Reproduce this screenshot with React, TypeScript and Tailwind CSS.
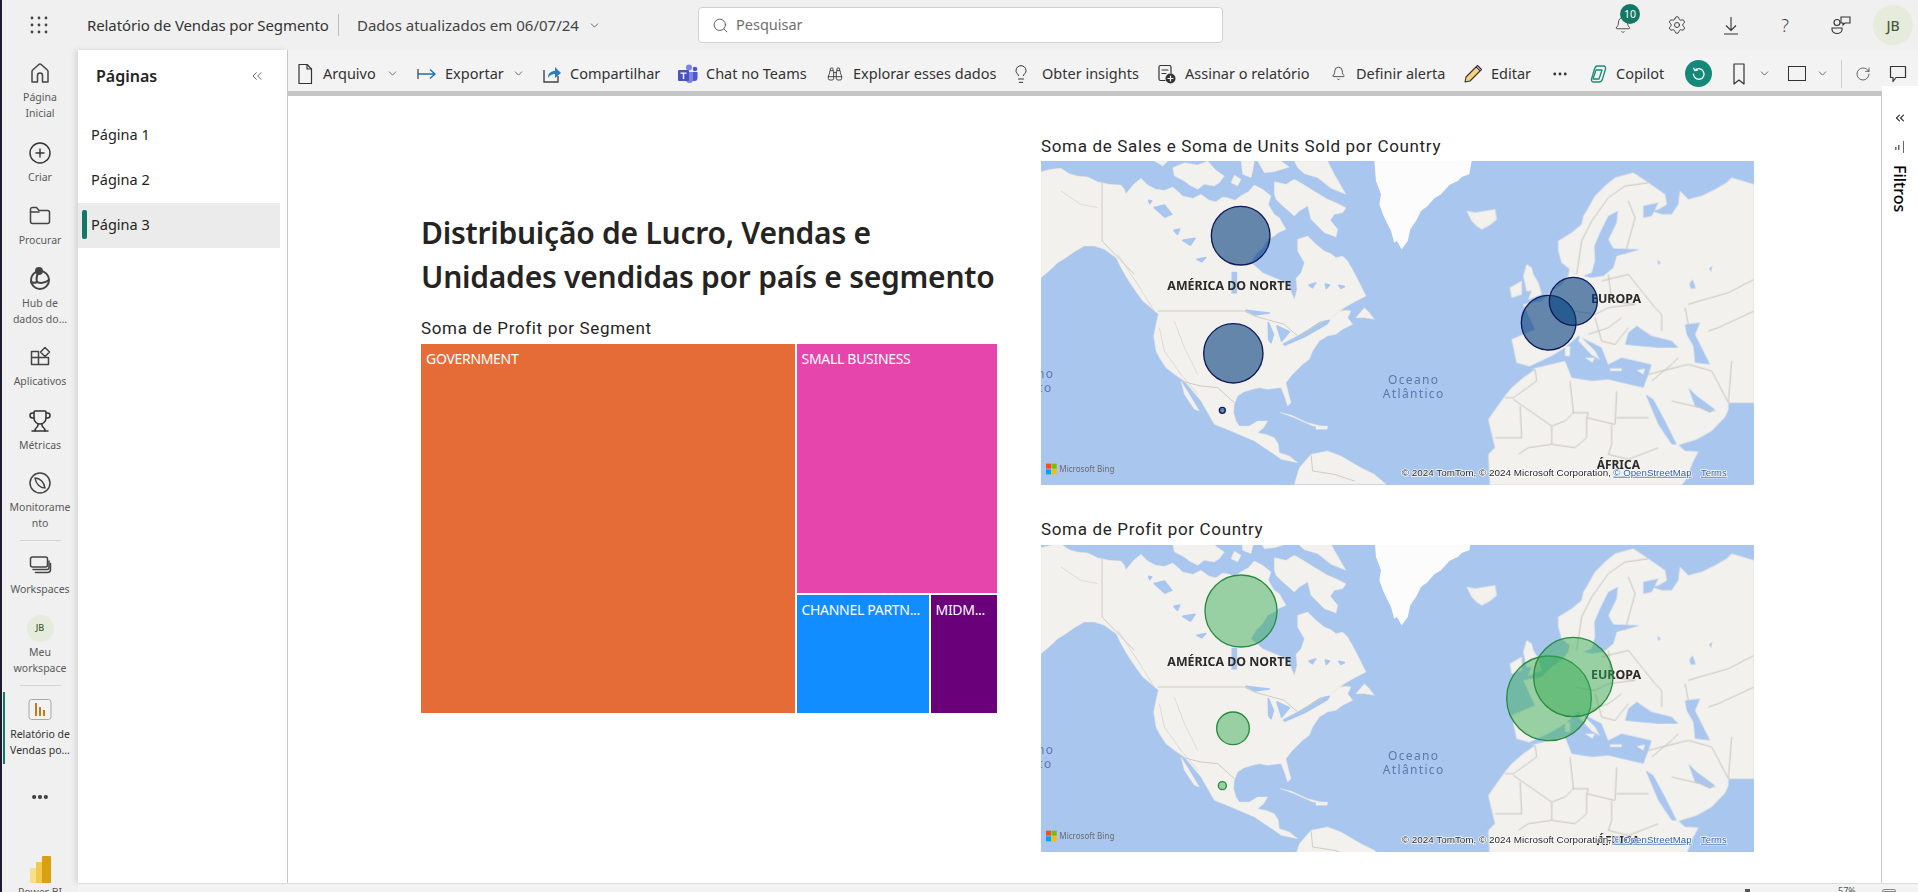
import React from "react";
import { ChevronDown, ChevronsLeft, Search, Settings, Bell, Binoculars, Lightbulb, RotateCw, Ellipsis, CirclePlus, Trophy } from "lucide-react";

const LAND_LEFT = [
  "M0,32 L30,25 L60,22 L85,38 L110,45 L140,48 L170,62 L205,70 L240,72 L250,85 L255,98 L278,70 L300,52 L320,72 L345,85 L370,88 L395,78 L412,92 L425,105 L455,112 L480,100 L505,118 L525,122 L545,108 L560,110 L582,118 L600,104 L622,92 L640,72 L665,85 L690,105 L682,130 L700,160 L715,170 L735,205 L712,215 L700,225 L680,235 L665,260 L645,280 L630,305 L650,322 L665,335 L695,348 L725,360 L745,380 L760,415 L768,385 L765,352 L780,335 L790,305 L770,270 L770,235 L800,225 L825,250 L850,270 L870,278 L885,290 L905,285 L920,300 L945,345 L975,405 L945,420 L910,440 L885,458 L870,470 L895,450 L915,448 L930,450 L920,470 L935,490 L905,505 L885,520 L860,525 L835,540 L815,570 L805,595 L785,610 L770,625 L750,645 L735,665 L742,695 L750,725 L740,735 L730,705 L720,680 L700,682 L680,685 L655,680 L635,685 L610,692 L590,705 L580,730 L578,755 L585,780 L595,795 L625,795 L650,780 L680,780 L668,800 L650,815 L680,822 L700,830 L712,850 L715,875 L745,885 L770,905 L745,900 L720,895 L700,880 L670,860 L640,840 L605,825 L570,810 L520,790 L500,755 L480,720 L455,690 L430,660 L400,640 L375,620 L358,595 L345,570 L338,525 L345,490 L352,460 L330,440 L305,420 L280,385 L260,355 L240,320 L225,290 L190,265 L160,255 L130,255 L100,272 L75,290 L50,305 L30,325 L0,350 Z",
  "M700,62 L735,70 L760,55 L790,72 L810,85 L860,115 L885,125 L915,140 L905,155 L880,160 L868,178 L890,205 L885,228 L850,215 L830,195 L810,175 L800,135 L775,150 L760,165 L740,148 L720,130 L705,115 L700,100 Z",
  "M395,20 L430,5 L470,12 L500,0 L525,28 L550,45 L535,65 L520,75 L490,70 L470,85 L445,72 L430,60 L400,45 Z",
  "M340,0 L380,0 L365,15 Z",
  "M600,0 L640,0 L635,30 L630,50 L605,40 Z",
  "M650,0 L720,0 L745,18 L700,32 L670,35 Z",
  "M760,0 L860,0 L880,40 L915,100 L870,82 L830,50 L790,38 L770,20 Z",
  "M580,42 L600,55 L590,75 L570,65 Z",
  "M945,470 L970,440 L985,455 L1000,475 L970,470 Z",
  "M718,755 L760,770 L815,795 L860,800 L800,785 L750,762 Z",
  "M825,795 L860,795 L858,805 L825,805 Z",
  "M420,660 L445,700 L475,750 L460,745 L430,700 Z",
  "M760,970 L775,920 L810,880 L860,870 L900,885 L960,920 L1000,940 L1035,970 Z",
];
const LAKES = [
  "M340,140 L370,132 L392,160 L372,168 Z",
  "M425,238 L462,232 L448,252 Z",
  "M468,295 L494,290 L482,302 Z",
  "M574,335 L586,335 L586,395 L574,395 Z",
  "M615,448 L685,456 L642,462 Z",
  "M682,485 L697,520 L690,545 L683,535 Z",
  "M708,495 L745,512 L722,540 Z",
  "M728,549 L780,522 L838,484 L865,478 L858,488 L790,527 L732,552 Z",
  "M804,372 L824,366 L814,380 Z",
  "M853,369 L866,372 L856,382 Z",
  "M893,373 L910,377 L900,382 Z",
  "M399,208 L416,204 L409,220 Z",
  "M323,118 L332,120 L326,127 Z",
];
const LAND_RIGHT = [
  "M215,150 L240,155 L270,150 L300,145 L305,175 L285,192 L260,205 L245,195 L230,180 Z",
  "M395,310 L410,320 L415,340 L430,365 L440,400 L400,415 L410,390 L395,390 L385,345 Z",
  "M345,380 L380,360 L380,400 L350,410 Z",
  "M545,345 L525,325 L500,305 L490,270 L490,240 L530,215 L560,190 L565,165 L575,150 L600,105 L630,75 L660,50 L715,35 L760,65 L810,100 L815,130 L790,145 L770,150 L800,160 L830,160 L850,130 L855,90 L880,115 L920,105 L960,85 L995,65 L1010,50 L1077,70 L1077,725 L1000,725 L1000,745 L990,768 L950,810 L905,835 L850,852 L870,870 L910,872 L895,900 L870,960 L860,972 L285,972 L280,880 L300,860 L280,775 L330,705 L350,680 L385,650 L420,625 L400,615 L365,605 L350,535 L420,505 L385,430 L440,420 L470,390 L500,370 L520,345 L525,315 Z",
];
const WATER_RIGHT = [
  "M565,345 L590,335 L600,300 L598,255 L615,215 L640,165 L668,150 L665,185 L640,235 L655,262 L735,265 L690,278 L665,285 L655,320 L625,345 L590,350 Z",
  "M745,135 L790,125 L770,165 L745,170 Z",
  "M400,618 L470,585 L510,560 L550,525 L620,560 L640,610 L680,590 L770,610 L760,640 L745,680 L640,655 L590,660 L530,650 L510,600 L415,622 Z",
  "M690,550 L700,515 L725,495 L770,525 L830,540 L850,560 L790,560 L730,555 Z",
  "M870,490 L915,485 L900,520 L945,610 L900,605 L895,555 L875,520 Z",
  "M880,680 L905,705 L960,745 L945,755 L900,735 Z",
  "M752,700 L775,715 L810,780 L845,850 L830,850 L790,790 Z",
  "M883,368 L893,355 L902,382 L887,382 Z",
  "M942,322 L952,314 L948,332 Z",
  "M787,297 L797,305 L790,312 Z",
];
const ISLANDS_RIGHT = [
  "M555,525 L600,570 L615,597 L590,582 L550,540 Z",
  "M570,590 L600,590 L592,605 Z",
  "M510,555 L525,555 L525,585 L510,585 Z",
  "M515,525 L528,525 L525,548 Z",
  "M645,622 L680,622 L680,630 L645,630 Z",
  "M725,628 L750,622 L745,640 Z",
  "M690,565 L770,560 L855,590 L770,610 L690,590 Z",
  "M620,560 L650,540 L680,555 L660,590 L640,610 Z",
];
const BORDERS_RIGHT = [
  "M420,625 L425,660 L355,710 L330,710",
  "M355,715 L470,795 L510,780 L535,755 L525,660",
  "M535,755 L580,755 L575,770 L660,790 L665,690",
  "M665,770 L760,770",
  "M375,735 L380,830 L300,830",
  "M470,795 L470,850 L400,860 L370,880",
  "M470,850 L540,860 L575,830 L575,770",
  "M650,790 L650,850 L640,880 L700,895 L790,860",
  "M540,450 L600,460 L640,440 L720,430",
  "M620,360 L700,340 L780,440 L800,460 L800,510",
  "M700,120 L720,170 L690,280",
  "M545,340 L560,240 L590,180 L640,110 L690,75 L760,65",
  "M760,640 L880,610 L950,630 L1000,725",
  "M770,660 L830,610 L850,590",
  "M1010,600 L1000,725",
  "M940,510 L970,500 L1077,450",
  "M880,430 L930,415 L1000,395 L1077,355",
  "M870,440 L880,490",
  "M600,470 L620,540 L660,550 L700,500",
  "M640,340 L650,420 L720,430",
  "M830,720 L960,750",
  "M580,520 L640,500 L680,470",
];
const BORDERS_LEFT = [
  "M183,65 L183,240 L280,340",
  "M350,450 L610,450 L640,465 L730,490 L770,525 L850,480",
  "M420,660 L480,675 L530,680 L580,725",
  "M810,880 L815,930 L880,940 L940,960",
];
const WATER_C = "#a9c6ee";
const LAND_C = "#f3f1ed";

type C = { x: number; y: number; r: number };

function MapVisual({ vb, bottom, circles, fill, stroke }: { vb: string; bottom: number; circles: C[]; fill: string; stroke: string }) {
  return (
    <svg viewBox={vb} preserveAspectRatio="none" className="block w-full h-full">
      <rect x="0" y="0" width="2139" height="972" fill={WATER_C} />
      <g className="blur-[0.6px]">
        <g fill={LAND_C} stroke="#e6e4df" strokeWidth="1.500">
          {LAND_LEFT.map((d) => <path key={d} d={d} />)}
        </g>
        <g fill={WATER_C} stroke={WATER_C} strokeWidth="5" strokeLinejoin="round">{LAKES.map((d) => <path key={d} d={d} />)}</g>
        <g fill="none" stroke="#dfdcd6" strokeWidth="3">
          <path d="M355,500 L370,570 L420,640 L470,700" />
          <path d="M400,480 L430,560 L470,640" />
          <path d="M230,280 L290,370 L340,450" />
          <path d="M60,90 L120,130 L170,140" />
        </g>
        <g fill="none" stroke="#cfccc5" strokeWidth="3">{BORDERS_LEFT.map((d) => <path key={d} d={d} />)}</g>
        <path d="M1000,0 L1292,0 L1285,40 L1262,48 L1250,60 L1225,72 L1200,100 L1180,112 L1160,135 L1140,150 L1125,180 L1108,205 L1100,240 L1082,265 L1068,240 L1060,245 L1050,210 L1040,190 L1028,165 L1015,130 L1020,100 L1005,60 Z" fill="#fcfcfc" />
        <g transform="translate(1062 0)">
          <g fill={LAND_C} stroke="#e6e4df" strokeWidth="1.500">{LAND_RIGHT.map((d) => <path key={d} d={d} />)}</g>
          <g fill={WATER_C}>{WATER_RIGHT.map((d) => <path key={d} d={d} />)}</g>
          <g fill={LAND_C}>{ISLANDS_RIGHT.map((d) => <path key={d} d={d} />)}</g>
          <g fill="none" stroke="#c8c5be" strokeWidth="3">{BORDERS_RIGHT.map((d) => <path key={d} d={d} />)}</g>
        </g>
      </g>
      <g className="font-['Noto_Sans',sans-serif]">
        <text x="565" y="388" textAnchor="middle" fontSize="36" fontWeight="700" fill="#2b2b2b" textLength="372" lengthAdjust="spacingAndGlyphs">AMÉRICA DO NORTE</text>
        <text x="1725" y="427" textAnchor="middle" fontSize="36" fontWeight="700" fill="#2b2b2b" textLength="150" lengthAdjust="spacingAndGlyphs">EUROPA</text>
        <text x="1732" y="925" textAnchor="middle" fontSize="36" fontWeight="700" fill="#2b2b2b" textLength="130" lengthAdjust="spacingAndGlyphs">ÁFRICA</text>
        <text x="1118" y="670" textAnchor="middle" fontSize="36" fill="#5b78ad" letterSpacing="4">Oceano</text>
        <text x="1118" y="712" textAnchor="middle" fontSize="36" fill="#5b78ad" letterSpacing="4">Atlântico</text>
        <text x="-12" y="650" fontSize="36" fill="#5b78ad" letterSpacing="4">no</text>
        <text x="-12" y="692" fontSize="36" fill="#5b78ad" letterSpacing="4">co</text>
      </g>
      {circles.map((c) => (
        <circle key={c.x} cx={c.x} cy={c.y} r={c.r} fill={fill} stroke={stroke} strokeWidth="4" />
      ))}
      <g>
        <rect x="15" y={bottom - 64} width="15" height="15" fill="#f25022" />
        <rect x="32" y={bottom - 64} width="15" height="15" fill="#7fba00" />
        <rect x="15" y={bottom - 47} width="15" height="15" fill="#00a4ef" />
        <rect x="32" y={bottom - 47} width="15" height="15" fill="#ffb900" />
        <text x="55" y={bottom - 38} fontSize="27" fill="#6b6b6b" textLength="165" lengthAdjust="spacingAndGlyphs" className="font-['Noto_Sans',sans-serif]">Microsoft Bing</text>
      </g>
      <g fontSize="28" className="font-['Liberation_Sans',sans-serif]" style={{ paintOrder: "stroke" }} stroke="#ffffff" strokeWidth="4">
        <text x="1082" y={bottom - 28} fill="#1f1f1f" textLength="628" lengthAdjust="spacingAndGlyphs">© 2024 TomTom, © 2024 Microsoft Corporation,</text>
        <text x="1717" y={bottom - 28} fill="#2a5db0" textDecoration="underline" textLength="235" lengthAdjust="spacingAndGlyphs">© OpenStreetMap</text>
        <text x="1980" y={bottom - 28} fill="#2a5db0" textDecoration="underline" textLength="77" lengthAdjust="spacingAndGlyphs">Terms</text>
      </g>
    </svg>
  );
}

const I = "text-[#333333]";

function GridDots() {
  return (
    <svg width="18" height="18" viewBox="0 0 18 18" fill="#444444">
      {[2, 9, 16].flatMap((y) => [2, 9, 16].map((x) => <circle key={`${x}-${y}`} cx={x} cy={y} r="1.4" />))}
    </svg>
  );
}

function RailIcon({ kind }: { kind: string }) {
  const p = { width: 24, height: 24, viewBox: "0 0 24 24", fill: "none", stroke: "#444444", strokeWidth: 1.5, strokeLinejoin: "round" as const, strokeLinecap: "round" as const };
  if (kind === "home") return <svg {...p}><path d="M4 21V10.500c0-.6.3-1.100.7-1.500L10.500 3.700a2.200 2.200 0 0 1 3 0L19.300 9c.4.400.7.900.7 1.500V21h-5.500v-6.500a2.500 2.500 0 0 0-5 0V21z" /></svg>;
  if (kind === "plus") return <CirclePlus size={24} strokeWidth={1.4} className={I} />;
  if (kind === "folder") return <svg {...p}><path d="M2.500 5.500a2 2 0 0 1 2-2h4l2.500 3h8.500a2 2 0 0 1 2 2v9a2 2 0 0 1-2 2h-15a2 2 0 0 1-2-2z" /><path d="M2.500 8h8.500" /></svg>;
  if (kind === "hub") return <svg {...p} strokeWidth={2}><circle cx="12" cy="13" r="9" /><path d="M12 4c-3 3-4 7-3 11 4 2 8 1 12-2" /><path d="M9 15c-2 1-4 1-6 0" /><circle cx="11" cy="4" r="3" fill="#444444" /></svg>;
  if (kind === "apps") return <svg {...p}><path d="M3.500 6.500h7v6h-7zM3.500 12.500h7v7h-7zM10.500 12.500h10v7h-10zM10.500 6.500v6" /><path d="M17 2.500l4.500 4.500-4.500 4.500-4.500-4.500z" fill="#f0f0f0" /></svg>;
  if (kind === "trophy") return <Trophy size={24} strokeWidth={1.5} className={I} />;
  if (kind === "compass") return <svg {...p}><circle cx="12" cy="12" r="10" /><path d="M7 7c5 0 9 4 10 10-5 0-9-4-10-10z" /></svg>;
  if (kind === "stack") return <svg {...p}><rect x="2.500" y="4" width="17" height="10" rx="2" /><path d="M5 16.500h14a2 2 0 0 0 2-2V8" /><path d="M7.500 19.500h12a3 3 0 0 0 3-3v-6" /></svg>;
  if (kind === "jb") return <div className="w-[27px] h-[27px] -my-[2px] rounded-full bg-[#e6ecdc] flex items-center justify-center text-[9px] font-medium text-[#4a5a3a]">JB</div>;
  if (kind === "report") return (
    <svg width="24" height="24" viewBox="0 0 24 24">
      <rect x="1" y="1.500" width="22" height="20" rx="2.500" fill="#f2f2f2" stroke="#a8a8a8" />
      <rect x="7" y="5" width="2" height="13" fill="#c27a1c" /><rect x="11" y="9" width="2" height="9" fill="#c27a1c" /><rect x="15" y="12" width="2" height="6" fill="#c27a1c" />
    </svg>
  );
  return <Ellipsis size={20} strokeWidth={3} className={I} />;
}

const railItems = [
  { k: "home", l: ["Página", "Inicial"], c: "mt-0" },
  { k: "plus", l: ["Criar"], c: "mt-[20px]" },
  { k: "folder", l: ["Procurar"], c: "mt-[19px]" },
  { k: "hub", l: ["Hub de", "dados do..."], c: "mt-[19px]" },
  { k: "apps", l: ["Aplicativos"], c: "mt-[18px]" },
  { k: "trophy", l: ["Métricas"], c: "mt-[20px]" },
  { k: "compass", l: ["Monitorame", "nto"], c: "mt-[18px]" },
  { k: "div", l: [], c: "mt-[9px]" },
  { k: "stack", l: ["Workspaces"], c: "mt-[12px]" },
  { k: "jb", l: ["Meu", "workspace"], c: "mt-[19px]" },
  { k: "div", l: [], c: "mt-[9px]" },
  { k: "report", l: ["Relatório de", "Vendas po..."], c: "mt-[12px]" },
  { k: "dots", l: [], c: "mt-[27px]" },
];

function Rail() {
  return (
    <div className="w-[76px] shrink-0 bg-[#f0f0f0] pt-[11px] flex flex-col items-center overflow-hidden">
      {railItems.map((it, i) =>
        it.k === "div" ? (
          <div key={i} className={`${it.c} h-px w-[41px] shrink-0 bg-[#d4d4d4]`} />
        ) : (
          <div key={i} className={`${it.c} relative w-full shrink-0 flex flex-col items-center`}>
            {it.k === "report" && <div className="absolute left-[1px] -top-[6px] w-[2px] h-[72px] bg-[#117865]" />}
            <div className="h-[24px] flex items-center justify-center"><RailIcon kind={it.k} /></div>
            {it.l.length > 0 && (
              <div className={`mt-[4px] text-center text-[10.5px] leading-[16px] whitespace-nowrap ${it.k === "report" ? "text-[#333333]" : "text-[#5a5a5a]"}`}>
                {it.l.map((t) => <div key={t}>{t}</div>)}
              </div>
            )}
          </div>
        )
      )}
      <svg className="mt-[47px] shrink-0" width="21" height="27" viewBox="0 0 21 27">
        <rect x="0" y="12" width="9" height="15" rx="1" fill="#f6e08a" />
        <rect x="6" y="6" width="9" height="21" rx="1" fill="#f2c94c" />
        <rect x="12" y="0" width="9" height="27" rx="1" fill="#d9a012" />
      </svg>
      <div className="text-[10.5px] leading-[16px] mt-[1px] text-[#5a5a5a] whitespace-nowrap">Power BI</div>
    </div>
  );
}

function Pages() {
  const rows = ["Página 1", "Página 2", "Página 3"];
  return (
    <div className="w-[209px] shrink-0 bg-white shadow-[-3px_0_5px_rgba(0,0,0,0.1)] border-r border-[#c8c8c8] box-content">
      <div className="flex items-center justify-between pl-[18px] pr-[22px] h-[51px]">
        <span className="text-[16px] font-semibold text-[#252423]">Páginas</span>
        <ChevronsLeft size={16} strokeWidth={1.1} className="text-[#333333]" />
      </div>
      <div className="mt-[12px] mr-[7px]">
        {rows.map((r, i) => (
          <div key={r} className={`relative h-[45px] flex items-center pl-[13px] pb-[1px] text-[14.5px] text-[#252423] ${i === 2 ? "bg-[#ebebeb]" : ""}`}>
            {i === 2 && <div className="absolute left-[4px] top-[7px] w-[5px] h-[29px] rounded-[2px] bg-[#117865]" />}
            {r}
          </div>
        ))}
      </div>
    </div>
  );
}

const Chev = ({ c = "" }: { c?: string }) => <ChevronDown size={13} strokeWidth={1.4} className={`text-[#444444] shrink-0 ${c}`} />;

function TbItem({ icon, label, w, chev, chevMr }: { icon: React.ReactNode; label: string; w: string; chev?: boolean; chevMr?: string }) {
  return (
    <div className={`${w} shrink-0 flex items-center`}>
      <div className="w-[20px] h-[24px] flex items-center justify-center shrink-0">{icon}</div>
      <span className="ml-[8px] text-[14.5px] text-[#333333] whitespace-nowrap">{label}</span>
      {chev && <Chev c={`ml-auto ${chevMr}`} />}
    </div>
  );
}

function Toolbar() {
  const s = { fill: "none", stroke: "#333333", strokeWidth: 1.2, strokeLinejoin: "round" as const, strokeLinecap: "round" as const };
  return (
    <div className="h-[41px] shrink-0 bg-[#f3f3f3] flex items-center pl-[7px] pt-[6px]">
      <TbItem w="w-[122px]" label="Arquivo" chev chevMr="mr-[18px]" icon={<svg width="16" height="22" viewBox="0 0 16 22" {...s}><path d="M2 1.500h8l4.500 4.500v14.500H2z" /><path d="M10 1.500V6h4.500" /></svg>} />
      <TbItem w="w-[125px]" label="Exportar" chev chevMr="mr-[17px]" icon={<svg width="20" height="14" viewBox="0 0 20 14" fill="none" stroke="#1c6fb8" strokeWidth="1.3"><path d="M1 2v10" stroke="#444444" /><path d="M1 7h17M13 2.500 18 7l-5 4.500" /></svg>} />
      <TbItem w="w-[136px]" label="Compartilhar" icon={<svg width="20" height="20" viewBox="0 0 20 20"><path d="M2 6v12h14v-6" fill="none" stroke="#444444" strokeWidth="1.4" /><path d="M6 14c0-5 3-7 7-7V3l6 6-6 5v-4c-3 0-5 1-7 4z" fill="#2c7cc4" /></svg>} />
      <TbItem w="w-[147px]" label="Chat no Teams" icon={<svg width="20" height="20" viewBox="0 0 20 20"><circle cx="11" cy="3.500" r="3" fill="#7b83eb" /><circle cx="17" cy="5" r="2.300" fill="#5059c9" /><path d="M13 8h6.500v6a3 3 0 0 1-3 3H13z" fill="#5059c9" /><path d="M6 8h9v7.500a3.500 3.500 0 0 1-7 0z" fill="#7b83eb" /><rect x="0" y="6" width="11" height="11" rx="1" fill="#4b53bc" /><path d="M2.500 8.500h6v1.300H6.200V15H4.800V9.800H2.500z" fill="#ffffff" /></svg>} />
      <TbItem w="w-[189px]" label="Explorar esses dados" icon={<Binoculars size={16} strokeWidth={1.3} className={I} />} />
      <TbItem w="w-[143px]" label="Obter insights" icon={<Lightbulb size={20} strokeWidth={1.2} className={`${I} -translate-x-[3px]`} />} />
      <TbItem w="w-[171px]" label="Assinar o relatório" icon={<svg width="18" height="20" viewBox="0 0 18 20" {...s}><path d="M13 9V3a1.500 1.500 0 0 0-1.500-1.500h-9A1.500 1.500 0 0 0 1 3v12a1.500 1.500 0 0 0 1.500 1.500H7" /><path d="M4 6h6M4 9.500h4" /><circle cx="12.500" cy="14.500" r="5" fill="#333333" stroke="none" /><path d="M12.500 12v5M10 14.500h5" stroke="#ffffff" /></svg>} />
      <TbItem w="w-[135px]" label="Definir alerta" icon={<Bell size={15} strokeWidth={1.3} className={I} />} />
      <TbItem w="w-[87px]" label="Editar" icon={<svg width="20" height="20" viewBox="0 0 20 20"><path d="M2 18l1-5L14.500 1.500l4 4L7 17z" fill="#f6d27a" stroke="#333333" strokeWidth="1.100" strokeLinejoin="round" /><path d="M14.500 1.500l4 4-1.500 1.500-4-4z" fill="#b57bc4" stroke="#333333" strokeWidth="1" /></svg>} />
      <div className="w-[38px] shrink-0 flex"><div className="w-[20px] flex justify-center"><Ellipsis size={18} strokeWidth={1.8} className={I} /></div></div>
      <TbItem w="w-[97px]" label="Copilot" icon={<svg width="19" height="18" viewBox="0 0 19 18" fill="none" stroke="#1c8a78" strokeWidth="1.300" strokeLinejoin="round"><path d="M8 1h6.500c1.500 0 2.500 1.500 2 3l-3 10c-.4 1.500-1.800 3-3.500 3H4.500c-1.500 0-2.500-1.500-2-3l3-10C6 2.500 6.500 1 8 1z" /><path d="M7 5h6l-3 9H4z" /></svg>} />
      <div className="w-[44px] shrink-0">
        <div className="w-[27px] h-[27px] rounded-full bg-[#14897a] flex items-center justify-center">
          <svg width="15" height="15" viewBox="0 0 15 15" fill="none" stroke="#ffffff" strokeWidth="1.300"><path d="M4 4.200a5.300 5.300 0 1 1-1.600 3.600" /><path d="M2.500 1.800 3.800 4.500 6.800 4" /></svg>
        </div>
      </div>
      <div className="w-[20px] flex justify-center shrink-0"><svg width="14" height="24" viewBox="0 0 14 24" {...s}><path d="M2 2h10v20l-5-4-5 4z" /></svg></div>
      <div className="w-[38px] shrink-0 flex"><Chev c="ml-[9px]" /></div>
      <div className="w-[20px] flex justify-center shrink-0"><div className="w-[18px] h-[15px] border-[1.500px] border-[#333333]" /></div>
      <Chev c="ml-[9px]" />
      <div className="ml-[12px] w-px h-[28px] bg-[#cfcfcf] shrink-0" />
      <div className="ml-[11px] w-[20px] flex justify-center shrink-0"><RotateCw size={16} strokeWidth={1.1} className={I} /></div>
      <div className="ml-[15px] w-[20px] flex justify-center shrink-0">
        <svg width="18" height="18" viewBox="0 0 18 18" {...s}><path d="M1.500 1.500h15v11H7L4 16.500v-4H1.500z" /></svg>
      </div>
    </div>
  );
}

const din = "font-['Roboto',sans-serif] text-[17px] leading-[20px] text-[#252423] tracking-[0.66px] whitespace-nowrap";

function Treemap() {
  const lab = "px-[5px] pt-[5px] text-[14px] leading-[20px] text-white whitespace-nowrap overflow-hidden tracking-[-0.3px]";
  return (
    <div className="mt-[6px] h-[369px] flex gap-[1.500px]">
      <div className={`w-[374px] shrink-0 bg-[#e66c37] ${lab}`}>GOVERNMENT</div>
      <div className="flex-1 flex flex-col gap-[2px]">
        <div className={`h-[249px] shrink-0 bg-[#e645ab] ${lab}`}>SMALL BUSINESS</div>
        <div className="flex-1 flex gap-[2px]">
          <div className={`w-[132px] shrink-0 bg-[#118dff] ${lab}`}>CHANNEL PARTN...</div>
          <div className={`flex-1 bg-[#6b007b] ${lab}`}>MIDM...</div>
        </div>
      </div>
    </div>
  );
}

function Canvas() {
  return (
    <div className="flex-1 bg-white flex pl-[133px] overflow-hidden">
      <div className="w-[576px] shrink-0 pt-[115px]">
        <div className="text-[30px] leading-[44px] font-semibold text-[#252423] whitespace-nowrap tracking-[-0.25px]">
          <div>Distribuição de Lucro, Vendas e</div>
          <div>Unidades vendidas por país e segmento</div>
        </div>
        <div className={`mt-[19px] ${din}`}>Soma de Profit por Segment</div>
        <Treemap />
      </div>
      <div className="ml-[44px] w-[713px] shrink-0 pt-[40px]">
        <div className={din}>Soma de Sales e Soma de Units Sold por Country</div>
        <div className="mt-[5px] h-[324px]">
          <MapVisual vb="0 0 2139 972" bottom={972} fill="rgba(3,63,125,0.6)" stroke="#0f1a5a"
            circles={[{ x: 599, y: 224, r: 88 }, { x: 577, y: 577, r: 89 }, { x: 544, y: 748, r: 9 }, { x: 1523, y: 485, r: 82 }, { x: 1597, y: 421, r: 72 }]} />
        </div>
        <div className={`mt-[34px] ${din}`}>Soma de Profit por Country</div>
        <div className="mt-[6px] h-[307px]">
          <MapVisual vb="0 24 2139 921" bottom={945} fill="rgba(52,170,80,0.47)" stroke="#2a8a40"
            circles={[{ x: 600, y: 222, r: 108 }, { x: 576, y: 574, r: 49 }, { x: 544, y: 746, r: 12 }, { x: 1524, y: 484, r: 127 }, { x: 1597, y: 420, r: 119 }]} />
        </div>
      </div>
    </div>
  );
}

function FilterPanel() {
  return (
    <div className="w-[36px] shrink-0 bg-white -mt-[5px] flex flex-col items-center pt-[25px] relative">
      <ChevronsLeft size={14} strokeWidth={2} className="text-[#333333]" />
      <svg className="mt-[16px]" width="10" height="12" viewBox="0 0 10 12" fill="#666666"><rect x="0" y="6" width="1.500" height="3" /><rect x="3" y="4" width="1.500" height="5" /><rect x="8" y="0" width="1" height="12" /></svg>
      <div className="mt-[12px] [writing-mode:vertical-rl] text-[16px] font-medium leading-[18px] text-black">Filtros</div>
    </div>
  );
}

export default function App() {
  return (
    <div className="w-[1918px] h-[892px] overflow-hidden flex flex-col bg-[#f0f0f0] border-l-2 border-[#1c1c2c] font-['Noto_Sans',sans-serif]">
      <div className="h-[50px] shrink-0 flex items-center bg-[#f0f0f0]">
        <div className="ml-[28px]"><GridDots /></div>
        <div className="ml-[39px] w-[241px] text-[15px] text-[#333333] whitespace-nowrap tracking-[-0.1px]">Relatório de Vendas por Segmento</div>
        <div className="ml-[10px] w-px h-[22px] bg-[#bdbdbd]" />
        <div className="ml-[18px] w-[220px] text-[15px] text-[#444444] whitespace-nowrap">Dados atualizados em 06/07/24</div>
        <Chev c="ml-[11px]" />
        <div className="ml-[97px] w-[525px] h-[36px] bg-white border border-[#d1d1d1] rounded-[4px] flex items-center pl-[13px]">
          <Search size={17} strokeWidth={1.2} className="text-[#444444]" />
          <span className="ml-[7px] text-[14.5px] text-[#707070]">Pesquisar</span>
        </div>
        <div className="ml-[388px] w-[24px] h-[24px] relative flex items-center justify-center">
          <Bell size={18} strokeWidth={1.1} className={I} />
          <div className="absolute -top-[9px] left-[9px] w-[20px] h-[20px] rounded-full bg-[#117865] text-white text-[10.5px] leading-[20px] text-center">10</div>
        </div>
        <div className="ml-[30px] w-[24px] flex justify-center"><Settings size={20} strokeWidth={1.1} className={I} /></div>
        <div className="ml-[30px] w-[24px] flex justify-center">
          <svg width="16" height="19" viewBox="0 0 16 19" fill="none" stroke="#333333" strokeWidth="1.100"><path d="M8 1v13M3 9.500 8 14.500l5-5M1 18h14" /></svg>
        </div>
        <div className="ml-[30px] w-[24px] text-center text-[18px] font-light leading-[24px] text-[#444444]">?</div>
        <div className="ml-[32px] w-[24px] flex justify-center">
          <svg width="20" height="20" viewBox="0 0 20 20" fill="none" stroke="#333333" strokeWidth="1.100"><circle cx="6" cy="7.500" r="3" /><path d="M1 13h10v1.500a5 4 0 0 1-10 0z" /><path d="M10 2h9v6h-5l-2 2V8h-2z" /></svg>
        </div>
        <div className="ml-[20px] w-[40px] h-[40px] rounded-full bg-[#e6ecdc] flex items-center justify-center text-[14px] font-medium text-[#4a5a3a]">JB</div>
      </div>
      <div className="flex-1 min-h-0 flex">
        <Rail />
        <div className="flex-1 min-w-0 flex flex-col">
          <div className="flex-1 min-h-0 flex">
            <Pages />
            <div className="flex-1 min-w-0 flex flex-col">
              <Toolbar />
              <div className="flex-1 min-h-0 flex">
                <div className="flex-1 min-w-0 flex flex-col border-r border-[#c8c8c8]">
                  <div className="h-[5px] shrink-0 bg-[#c4c4c4]" />
                  <Canvas />
                </div>
                <FilterPanel />
              </div>
            </div>
          </div>
          <div className="h-[9px] shrink-0 bg-[#f3f3f3] border-t border-[#dddddd] relative overflow-hidden flex items-end">
            <div className="ml-[1667px] w-[5px] h-[3px] bg-[#555555] shrink-0" />
            <div className="ml-[88px] text-[9px] leading-[2px] h-[2px] text-[#555555] shrink-0">57%</div>
            <div className="ml-[26px] w-[14px] h-[3px] border border-[#888888] rounded-t-[2px] shrink-0" />
          </div>
        </div>
      </div>
    </div>
  );
}
